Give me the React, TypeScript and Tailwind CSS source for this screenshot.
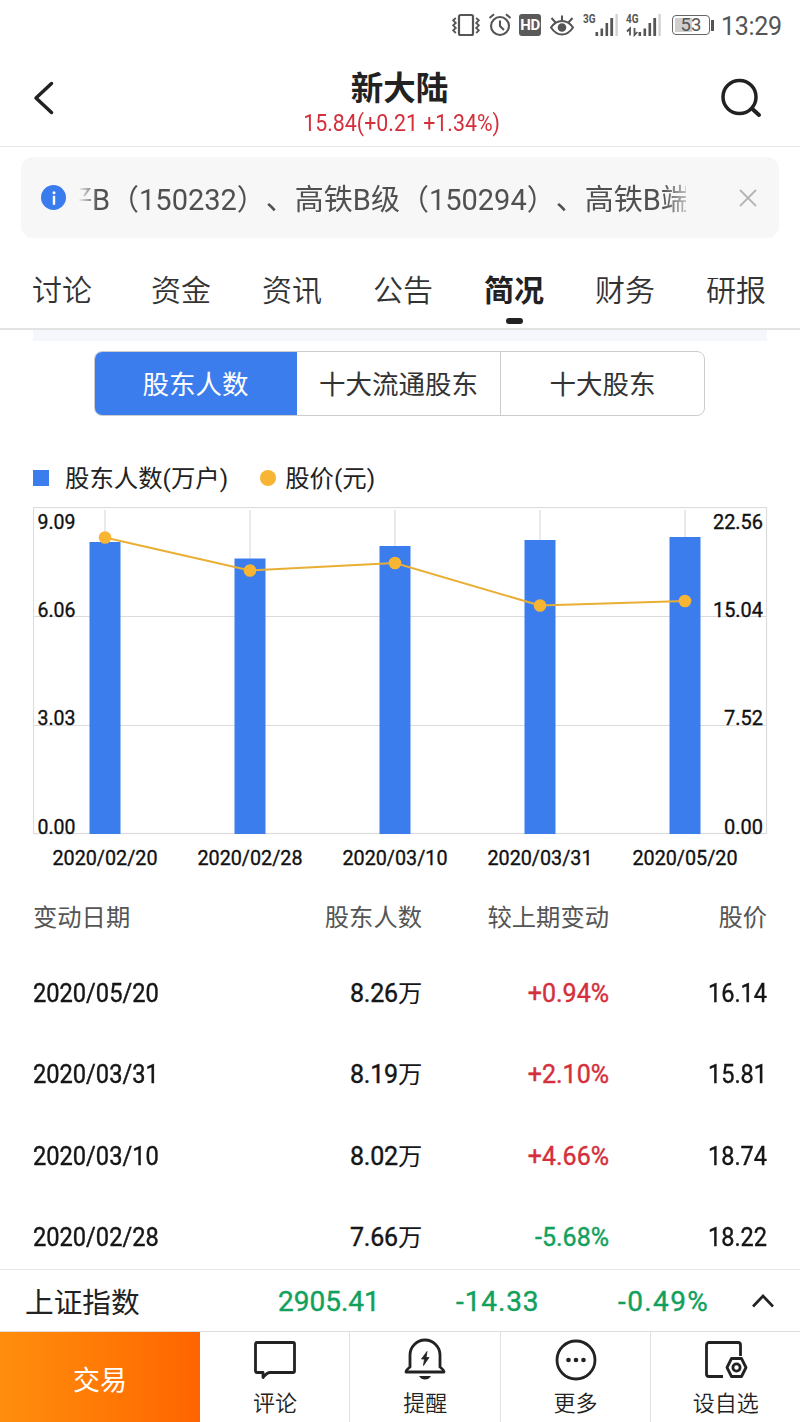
import type { ReactNode } from "react";
import clsx from "clsx";

type Holder = { date: string; count: string; change: string; price: string };

const tabs = ["讨论", "资金", "资讯", "公告", "简况", "财务", "研报"];
const segments = ["股东人数", "十大流通股东", "十大股东"];

const rows: Holder[] = [
  { date: "2020/05/20", count: "8.26", change: "+0.94%", price: "16.14" },
  { date: "2020/03/31", count: "8.19", change: "+2.10%", price: "15.81" },
  { date: "2020/03/10", count: "8.02", change: "+4.66%", price: "18.74" },
  { date: "2020/02/28", count: "7.66", change: "-5.68%", price: "18.22" },
];

// chart geometry, relative to the top-left corner of the plot
const points = [
  { label: "2020/02/20", x: 72, bar: 35, price: 30.5 },
  { label: "2020/02/28", x: 217, bar: 51.5, price: 63.5 },
  { label: "2020/03/10", x: 362, bar: 39, price: 56 },
  { label: "2020/03/31", x: 507, bar: 33, price: 98.5 },
  { label: "2020/05/20", x: 652, bar: 30, price: 94 },
];

const axis = [
  { y: 22, left: "9.09", right: "22.56", lw: 38, rw: 50 },
  { y: 109.5, left: "6.06", right: "15.04", lw: 38, rw: 50 },
  { y: 218, left: "3.03", right: "7.52", lw: 38, rw: 39 },
  { y: 327, left: "0.00", right: "0.00", lw: 38, rw: 39 },
];

function Signal({ label, data }: { label: string; data?: boolean }) {
  return (
    <svg width="36" height="24" viewBox="0 0 36 24" fill="#555">
      <text x="0" y="10" fontSize="13" fontWeight="700" textLength="12.5" lengthAdjust="spacingAndGlyphs">
        {label}
      </text>
      {data && (
        <path d="M4 22.500v-7L1 18.500M8.500 15v7l2.800-3" fill="none" stroke="#555" strokeWidth="1.8" />
      )}
      <rect x="12.5" y="19" width="2.6" height="4" />
      <rect x="17.5" y="15.5" width="2.6" height="7.5" />
      <rect x="22.5" y="10" width="2.6" height="13" />
      <rect x="27.3" y="5" width="2.8" height="18" />
      <rect x="32.4" y="1" width="2.4" height="22" fill="#d2d2d2" />
    </svg>
  );
}

function StatusBar() {
  return (
    <div className="flex h-[50px] shrink-0 items-center justify-end pr-[17px] text-[#555]">
      {/* vibrate */}
      <svg width="30" height="24" viewBox="0 0 30 24" fill="none" stroke="#555" strokeWidth="2">
        <rect x="8" y="2" width="14" height="20" rx="1.5" strokeWidth="2.2" />
        <path d="m4.8 5-2.6 2.4L4.8 10 2.2 12.4 4.8 15l-2.6 2.4L4.8 20" strokeWidth="1.8" />
        <path d="m25.2 5 2.6 2.4-2.6 2.6 2.6 2.4-2.6 2.6 2.6 2.4-2.6 2.6" strokeWidth="1.8" />
      </svg>
      {/* alarm */}
      <svg className="ml-[7px]" width="24" height="24" viewBox="0 0 24 24" fill="none" stroke="#555" strokeWidth="2.1">
        <circle cx="12" cy="13" r="9" />
        <path d="M12 7.5V13l4 4M1.5 5 6 1.3M22.500 5 18 1.3" />
      </svg>
      <div className="ml-[7px] flex h-[22px] w-[22px] items-center justify-center rounded-[3px] bg-[#5a5a5a] text-[15px] font-bold leading-none tracking-[-0.5px] text-white">
        HD
      </div>
      {/* eye comfort */}
      <svg className="ml-[8px]" width="26" height="24" viewBox="0 0 26 24" fill="none" stroke="#555" strokeWidth="2">
        <path d="M2 14.500C5 10 9 8 13 8s8 2 11 6.500C21 19 17 21.500 13 21.500S5 19 2 14.500z" />
        <circle cx="13" cy="14.500" r="4.300" fill="#555" stroke="none" />
        <path d="M13 8V2.500M6.500 9.500 2.500 5M19.500 9.500l4-4.500" />
      </svg>
      <div className="ml-[8px] flex gap-[7px]">
        <Signal label="3G" />
        <Signal label="4G" data />
      </div>
      <div className="ml-[10px] flex h-[20px] w-[38px] rounded-[4px] border-[1.5px] border-[#666] p-[2px]">
        <div className="relative h-full w-full">
          <div className="h-full w-[17px] bg-[#cfcfcf]" />
          <span className="absolute inset-0 flex items-center justify-center text-[18.500px] leading-none">53</span>
        </div>
      </div>
      <div className="ml-[1px] h-[11px] w-[3px] bg-[#555]" />
      <span className="ml-[7px] mt-[3px] w-[62px] whitespace-nowrap text-[25px] leading-none tracking-[-0.300px]">13:29</span>
    </div>
  );
}

function Header() {
  return (
    <header className="flex h-[97px] shrink-0 items-center justify-between border-b border-[#e6e6e6] pl-[32px] pr-[37px]">
      <svg width="42" height="36" viewBox="0 0 42 36" fill="none" stroke="#222" strokeWidth="3.500" strokeLinecap="round" strokeLinejoin="round">
        <path d="M19.500 3.500 4 18l15.500 14.500" />
      </svg>
      <div className="flex flex-col items-center pl-[6px] pt-[10px]">
        <h1 className="mr-[2px] text-[32.500px] font-bold leading-[40px] text-[#222]">新大陆</h1>
        <p className="-ml-[15px] -mr-[18px] -mt-px scale-x-[0.890] whitespace-nowrap text-[24px] leading-[30px] text-[#d4303c]">
          15.84(+0.21 +1.34%)
        </p>
      </div>
      <svg width="42" height="42" viewBox="0 0 42 42" fill="none" stroke="#222" strokeWidth="3.500" strokeLinecap="round">
        <circle cx="18.500" cy="20" r="16.500" />
        <path d="m32 32.500 6 5.500" strokeWidth="4" />
      </svg>
    </header>
  );
}

function Notice() {
  return (
    <div className="mx-[21px] mt-[10px] flex h-[81px] shrink-0 items-center rounded-[12px] bg-[#f7f7f7] pl-[20px] pr-[21px]">
      <span className="flex h-[25px] w-[25px] items-center justify-center rounded-full bg-[#3a7cee]">
        <svg width="6" height="14" viewBox="0 0 6 14" fill="#fff">
          <circle cx="3" cy="1.700" r="1.500" />
          <rect x="1.800" y="4.800" width="2.400" height="9" />
        </svg>
      </span>
      <div className="ml-[12px] mt-[4px] flex w-[608px] items-center overflow-hidden whitespace-nowrap text-[29px] leading-[40px] text-[#505050] [mask-image:linear-gradient(to_right,transparent,black_20px,black_585px,#0005_608px)] [text-spacing-trim:space-all]">
        <svg className="-mt-[12px] shrink-0" width="14" height="16" viewBox="0 0 14 16" fill="none" stroke="#505050" strokeWidth="2">
          <path d="M2 3h9L6 10M1 14h12" />
        </svg>
        B（150232）、高铁B级（150294）、高铁B端
      </div>
      <svg className="ml-auto" width="20" height="20" viewBox="0 0 20 20" stroke="#b5b5b5" strokeWidth="1.800">
        <path d="m2 2 16 16M18 2 2 18" />
      </svg>
    </div>
  );
}

function Tabs() {
  return (
    <nav className="flex h-[92px] shrink-0 justify-between border-b-2 border-[#e3e3e3] pl-[32px] pr-[34px] pt-[32px]">
      {tabs.map((t, i) => (
        <div key={t} className={clsx("flex flex-col items-center", i === 0 && "mr-[8px]")}>
          <span
            className={clsx(
              "text-[30px] leading-[42px]",
              t === "简况" ? "font-bold text-[#222]" : "font-[350] text-[#333]"
            )}
          >
            {t}
          </span>
          {t === "简况" && <i className="mt-[6px] h-[6px] w-[17px] rounded-[3px] bg-[#222]" />}
        </div>
      ))}
    </nav>
  );
}

function HolderChart() {
  return (
    <svg className="ml-[33px] mt-[11px] block shrink-0" width="740" height="364" viewBox="0 0 740 364">
      <g fill="none" stroke="#dcdcdc" strokeWidth="1.200">
        <rect x="0.500" y="0.500" width="733" height="326" />
        <path d="M0 109.500h734M0 218.500h734" />
        {points.map((p) => (
          <path key={p.label} d={`M${p.x} 3V${p.bar}`} />
        ))}
      </g>
      {points.map((p) => (
        <rect key={p.label} x={p.x - 15.5} y={p.bar} width="31" height={327 - p.bar} fill="#3b7ded" />
      ))}
      <polyline
        points={points.map((p) => `${p.x},${p.price}`).join(" ")}
        fill="none"
        stroke="#e9ae34"
        strokeWidth="2"
      />
      {points.map((p) => (
        <circle key={p.label} cx={p.x} cy={p.price} r="6.300" fill="#f8b533" />
      ))}
      <g fontSize="20.500" fill="#111" stroke="#111" strokeWidth="0.350">
        {axis.map((a) => (
          <g key={a.y}>
            <text x="4.500" y={a.y} textLength={a.lw} lengthAdjust="spacingAndGlyphs">
              {a.left}
            </text>
            <text x={730 - a.rw} y={a.y} textLength={a.rw} lengthAdjust="spacingAndGlyphs">
              {a.right}
            </text>
          </g>
        ))}
        {points.map((p) => (
          <text key={p.label} x={p.x - 52.5} y="358" textLength="105" lengthAdjust="spacingAndGlyphs">
            {p.label}
          </text>
        ))}
      </g>
    </svg>
  );
}

const cols = "grid grid-cols-[200px_189px_187px_158px] px-[33px]";

function HolderTable() {
  return (
    <div className="mt-[5px] shrink-0">
      <div className={clsx(cols, "h-[77px] items-start pt-[24px] text-[24.300px] leading-[36px] text-[#555]")}>
        <span>变动日期</span>
        <span className="text-right">股东人数</span>
        <span className="text-right">较上期变动</span>
        <span className="text-right">股价</span>
      </div>
      {rows.map((r) => (
        <div
          key={r.date}
          className={clsx(cols, "h-[81.400px] items-center text-[25px] text-[#161616] [-webkit-text-stroke:0.4px]")}
        >
          <span className="origin-left scale-x-[0.945]">{r.date}</span>
          <span className="text-right tracking-[-0.200px]">
            {r.count}
            <span className="text-[24.300px] [-webkit-text-stroke:0]">万</span>
          </span>
          <span className={clsx("text-right", r.change.startsWith("+") ? "text-[#d4303c]" : "text-[#12a15d]")}>
            {r.change}
          </span>
          <span className="origin-right scale-x-[0.940] text-right">{r.price}</span>
        </div>
      ))}
    </div>
  );
}

function NavItem({ label, children }: { label: string; children: ReactNode }) {
  return (
    <div className="flex flex-1 flex-col items-center border-r border-[#e2e2e2] pl-px pt-[6px] last:border-r-0">
      <svg width="44" height="44" viewBox="0 0 44 44" fill="none" stroke="#222" strokeWidth="2.800" strokeLinejoin="round">
        {children}
      </svg>
      <span className="mt-[6px] text-[22px] font-[350] leading-[32px] text-[#222]">{label}</span>
    </div>
  );
}

export default function App() {
  return (
    <main className="flex h-[1422px] w-[800px] flex-col overflow-hidden bg-white font-['Roboto','Noto_Sans_CJK_SC',sans-serif]">
      <StatusBar />
      <Header />
      <Notice />
      <Tabs />

      <section className="flex min-h-0 flex-1 flex-col overflow-hidden">
        <div className="mx-[33px] h-[11px] shrink-0 bg-[#f6f7fd]" />

        <div className="ml-[94px] mt-[10px] flex h-[65px] w-[611px] shrink-0 overflow-hidden rounded-[8px] border border-[#ccc] text-[26.500px] text-[#333]">
          {segments.map((s, i) => (
            <div
              key={s}
              className={clsx(
                "flex flex-1 items-center justify-center whitespace-nowrap pt-[3px]",
                i === 0 && "-my-px -ml-px bg-[#3b7ded] text-white",
                i === 2 && "border-l border-[#ccc]"
              )}
            >
              {s}
            </div>
          ))}
        </div>

        <div className="mt-[43px] flex h-[37px] shrink-0 items-center pl-[33px] text-[24.400px] text-[#222]">
          <i className="h-[16px] w-[16px] bg-[#3b7ded]" />
          <span className="ml-[16px] mt-[4px]">股东人数(万户)</span>
          <i className="ml-[32px] h-[16px] w-[16px] rounded-full bg-[#f8b533]" />
          <span className="ml-[9px] mt-[4px]">股价(元)</span>
        </div>

        <HolderChart />
        <HolderTable />
      </section>

      <footer className="shrink-0 bg-white">
        <div className="flex h-[62px] items-center border-t border-[#e6e6e6] pl-[25px] pr-[25px] text-[28px] text-[#12a15d] [-webkit-text-stroke:0.4px]">
          <span className="mt-[6px] w-[253px] text-[28.700px] text-[#222] [-webkit-text-stroke:0]">上证指数</span>
          <span className="mt-[3px] w-[178px]">2905.41</span>
          <span className="mt-[3px] w-[162px] tracking-[0.900px]">-14.33</span>
          <span className="mt-[3px] tracking-[1.400px]">-0.49%</span>
          <svg className="ml-auto" width="24" height="16" viewBox="0 0 24 16" fill="none" stroke="#222" strokeWidth="2.600">
            <path d="M2 13.500 12 3l10 10.500" />
          </svg>
        </div>
        <div className="flex h-[91px] border-t border-[#dedede]">
          <div className="flex w-[200px] items-center justify-center bg-linear-to-r from-[#ff8e0d] to-[#ff6400] pt-[8px] text-[27px] text-white">
            交易
          </div>
          <NavItem label="评论">
            <path d="M4 4.500h36a1.500 1.500 0 0 1 1.500 1.500v27a1.500 1.500 0 0 1-1.500 1.500H17c-3 0-4.500 2-7 5v-5H4A1.500 1.500 0 0 1 2.500 33V6A1.500 1.500 0 0 1 4 4.500z" />
          </NavItem>
          <NavItem label="提醒">
            <path d="M7 29V17a15 15 0 0 1 30 0v12c2 1.500 4 3 4 5H3c0-2 2-3.500 4-5z" />
            <path d="M16 38h12c-1.500 2.500-3.500 3.500-6 3.500S17.500 40.500 16 38z" fill="#222" stroke="none" />
            <path d="M24 13.500 18.500 21h3l-1 6.500 5.500-8h-3z" fill="#222" stroke="#222" strokeWidth="0.800" />
          </NavItem>
          <NavItem label="更多">
            <circle cx="22" cy="22" r="19" />
            <g fill="#222" stroke="none">
              <circle cx="14.500" cy="22" r="2.300" />
              <circle cx="22" cy="22" r="2.300" />
              <circle cx="29.500" cy="22" r="2.300" />
            </g>
          </NavItem>
          <NavItem label="设自选">
            <path d="M36.500 18V7a2.500 2.500 0 0 0-2.500-2.500H5A2.500 2.500 0 0 0 2.500 7v29A2.500 2.500 0 0 0 5 38.500h14" />
            <path d="M27.500 20.500h10l4.500 9-4.500 9h-10l-4.500-9z" />
            <circle cx="32.500" cy="29.500" r="3.600" />
          </NavItem>
        </div>
      </footer>
    </main>
  );
}
